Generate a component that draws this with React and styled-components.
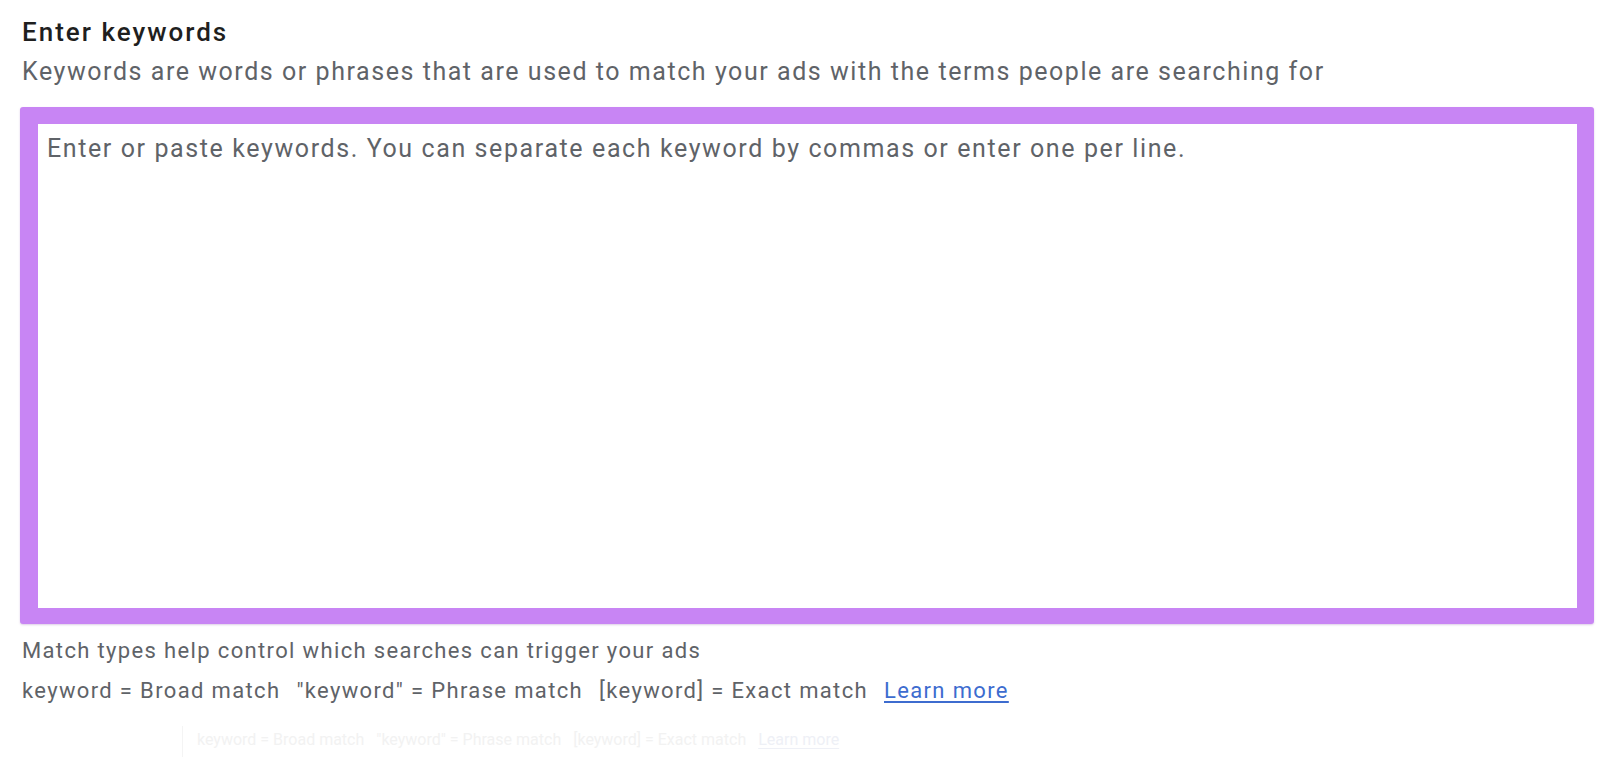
import styled, { createGlobalStyle } from 'styled-components';

const GlobalStyle = createGlobalStyle`
  body {
    margin: 0;
    background: #ffffff;
    font-family: Roboto, "Noto Sans", Arial, sans-serif;
  }
`;

const Page = styled.div`
  padding: 16px 6px 0 20px;
  height: 757px;
  box-sizing: border-box;
  overflow: hidden;
`;

const Title = styled.h3`
  margin: 0;
  padding-left: 2px;
  font-size: 26px;
  line-height: 32px;
  font-weight: 500;
  letter-spacing: 2px;
  color: #1f1f1f;
`;

const Subtitle = styled.p`
  margin: 8px 0 0;
  padding-left: 2px;
  font-size: 25px;
  line-height: 32px;
  letter-spacing: 1.55px;
  color: #5f6368;
`;

const KeywordBox = styled.div`
  margin-top: 19px;
  height: 517px;
  box-sizing: border-box;
  border-style: solid;
  border-color: #c885f4;
  border-width: 17px 17px 16px 18px;
  border-radius: 3px;
  background: #ffffff;
  box-shadow: 0 1px 2px rgba(120, 60, 160, 0.25);
  padding: 9px 9px;
`;

const Placeholder = styled.div`
  font-size: 25px;
  line-height: 32px;
  letter-spacing: 1.6px;
  color: #5f6368;
`;

const HelpText = styled.div`
  padding-left: 2px;
  margin-top: 7px;
  font-size: 22px;
  line-height: 40px;
  letter-spacing: 1.35px;
  color: #5f6368;
`;

const MatchRow = styled.div`
  display: flex;
  align-items: baseline;
  gap: ${({ $gap }) => $gap}px;
  padding-left: ${({ $indent }) => $indent}px;
  font-size: ${({ $size }) => $size}px;
  line-height: ${({ $line }) => $line}px;
  letter-spacing: ${({ $spacing }) => $spacing}px;
  color: ${({ $color }) => $color};
`;

const LearnLink = styled.a`
  color: ${({ $color }) => $color};
  text-decoration: underline;
  text-underline-offset: 3px;
  cursor: pointer;
`;

const Ghost = styled.div`
  margin: 15px 0 0 162px;
  border-left: 1px solid #f4f4f4;
  padding: 2px 0 6px 14px;
`;

function MatchTypes({ size, line, gap, spacing, color, linkColor, indent }) {
  return (
    <MatchRow
      $size={size}
      $line={line}
      $gap={gap}
      $spacing={spacing}
      $color={color}
      $indent={indent}
    >
      <span>keyword = Broad match</span>
      <span>"keyword" = Phrase match</span>
      <span>[keyword] = Exact match</span>
      <LearnLink $color={linkColor}>Learn more</LearnLink>
    </MatchRow>
  );
}

export default function App() {
  return (
    <Page>
      <GlobalStyle />
      <Title>Enter keywords</Title>
      <Subtitle>
        Keywords are words or phrases that are used to match your ads with the terms people are searching for
      </Subtitle>
      <KeywordBox>
        <Placeholder>
          Enter or paste keywords. You can separate each keyword by commas or enter one per line.
        </Placeholder>
      </KeywordBox>
      <HelpText>Match types help control which searches can trigger your ads</HelpText>
      <MatchTypes
        size={22}
        line={40}
        gap={16}
        spacing={1.35}
        indent={2}
        color="#5f6368"
        linkColor="#3d6ccf"
      />
      <Ghost>
        <MatchTypes
          size={16}
          line={24}
          gap={12}
          spacing={0}
          indent={0}
          color="#f2f2f2"
          linkColor="#eef0f6"
        />
      </Ghost>
    </Page>
  );
}
